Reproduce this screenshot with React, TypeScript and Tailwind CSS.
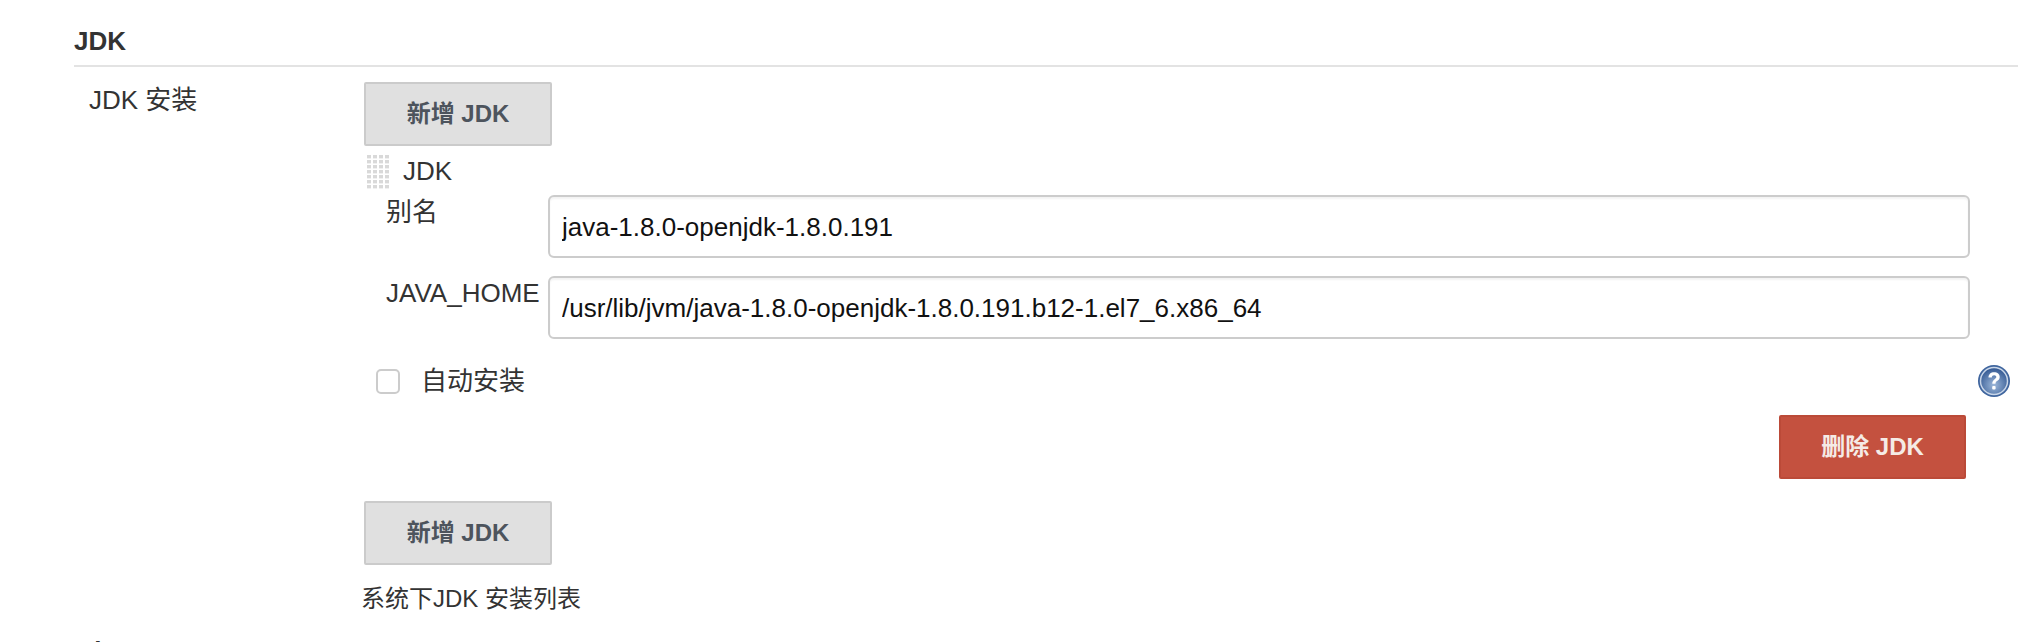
import React from "react";

const font = "font-['Liberation_Sans','Noto_Sans_CJK_SC',sans-serif]";

const AddButton = () => (
  <button className="w-[188px] h-[64px] bg-[#e0e0e0] border-2 border-[#cbcbcb] rounded-[2px] text-[24px] font-bold text-[#4d545d]">
    新增 JDK
  </button>
);

const DragHandle = () => (
  <svg width="24" height="36" viewBox="0 0 24 36" className="shrink-0">
    {Array.from({ length: 28 }).map((_, i) => (
      <rect key={i} x={(i % 4) * 6 + 1} y={Math.floor(i / 4) * 5 + 1} width="4" height="3.4" fill="#d9d9d9" />
    ))}
  </svg>
);

const HelpIcon = () => (
  <svg width="34" height="34" viewBox="0 0 34 34">
    <defs>
      <radialGradient id="help" cx="50%" cy="65%" r="65%">
        <stop offset="0%" stopColor="#9db8da" />
        <stop offset="100%" stopColor="#2f5590" />
      </radialGradient>
    </defs>
    <circle cx="17" cy="17" r="16" fill="#3f659e" />
    <circle cx="17" cy="17" r="13.5" fill="url(#help)" stroke="#c9d6e8" strokeWidth="1.5" />
    <path d="M11.5 13.5c0-3.4 2.4-5.3 5.6-5.3 3.3 0 5.6 1.9 5.6 4.7 0 2-1 3-2.6 4.1-1.2.8-1.6 1.4-1.6 2.8h-3.2c0-2.3.7-3.4 2.3-4.6 1.2-.9 1.7-1.3 1.7-2.2 0-1-.9-1.7-2.1-1.7-1.4 0-2.3.9-2.4 2.2z" fill="#fff" />
    <rect x="15.2" y="22" width="3.4" height="3.4" rx="1" fill="#fff" />
  </svg>
);

const Field = ({ label, value }: { label: string; value: string }) => (
  <div className="flex items-start">
    <span className="w-[184px] shrink-0 pl-[22px] pt-[3px]">{label}</span>
    <input
      readOnly
      value={value}
      className="h-[63px] flex-1 min-w-0 border-2 border-[#cccccc] rounded-[6px] px-[12px] pt-[2px] text-[26px] text-[#111] shadow-[inset_0_2px_2px_rgba(0,0,0,0.05)] outline-none"
    />
  </div>
);

const App = () => {
  return (
    <div className={`${font} w-full h-[642px] overflow-hidden bg-white text-[26px] leading-[28px] text-[#333]`}>
      <div className="ml-[74px] border-b-2 border-[#e3e3e3] h-[67px] pt-[27px] text-[26px] font-bold">JDK</div>
      <div className="flex ml-[74px] pt-[15px]">
        <div className="w-[290px] shrink-0 pl-[15px] pt-[4px]">JDK 安装</div>
        <div className="flex-1 min-w-0 pr-[48px]">
          <AddButton />
          <div className="flex items-center gap-[13px] mt-[8px] pl-[2px]">
            <DragHandle />
            <span className="-mt-[2px]">JDK</span>
          </div>
          <div className="flex flex-col gap-[18px] mt-[5px]">
            <Field label="别名" value="java-1.8.0-openjdk-1.8.0.191" />
            <Field label="JAVA_HOME" value="/usr/lib/jvm/java-1.8.0-openjdk-1.8.0.191.b12-1.el7_6.x86_64" />
          </div>
          <div className="relative flex items-center mt-[28px] pl-[12px] h-[28px]">
            <input type="checkbox" className="appearance-none w-[24px] h-[25px] bg-white border-2 border-[#cccccc] rounded-[5px]" />
            <span className="ml-[21px]">自动安装</span>
            <div className="absolute right-[-41px] top-[-3px]">
              <HelpIcon />
            </div>
          </div>
          <div className="flex justify-end mt-[20px] pr-[4px]">
            <button className="w-[187px] h-[64px] bg-[#c4513f] rounded-[2px] border-2 border-[#bb4a38] text-[24px] font-bold text-[#f5ebe6]">
              删除 JDK
            </button>
          </div>
          <div className="mt-[22px]">
            <AddButton />
          </div>
          <div className="mt-[20px] -ml-[3px] text-[24px]">系统下JDK 安装列表</div>
        </div>
      </div>
      <div className="ml-[74px] mt-[24px] text-[26px] font-bold">Git</div>
    </div>
  );
};

export default App;
